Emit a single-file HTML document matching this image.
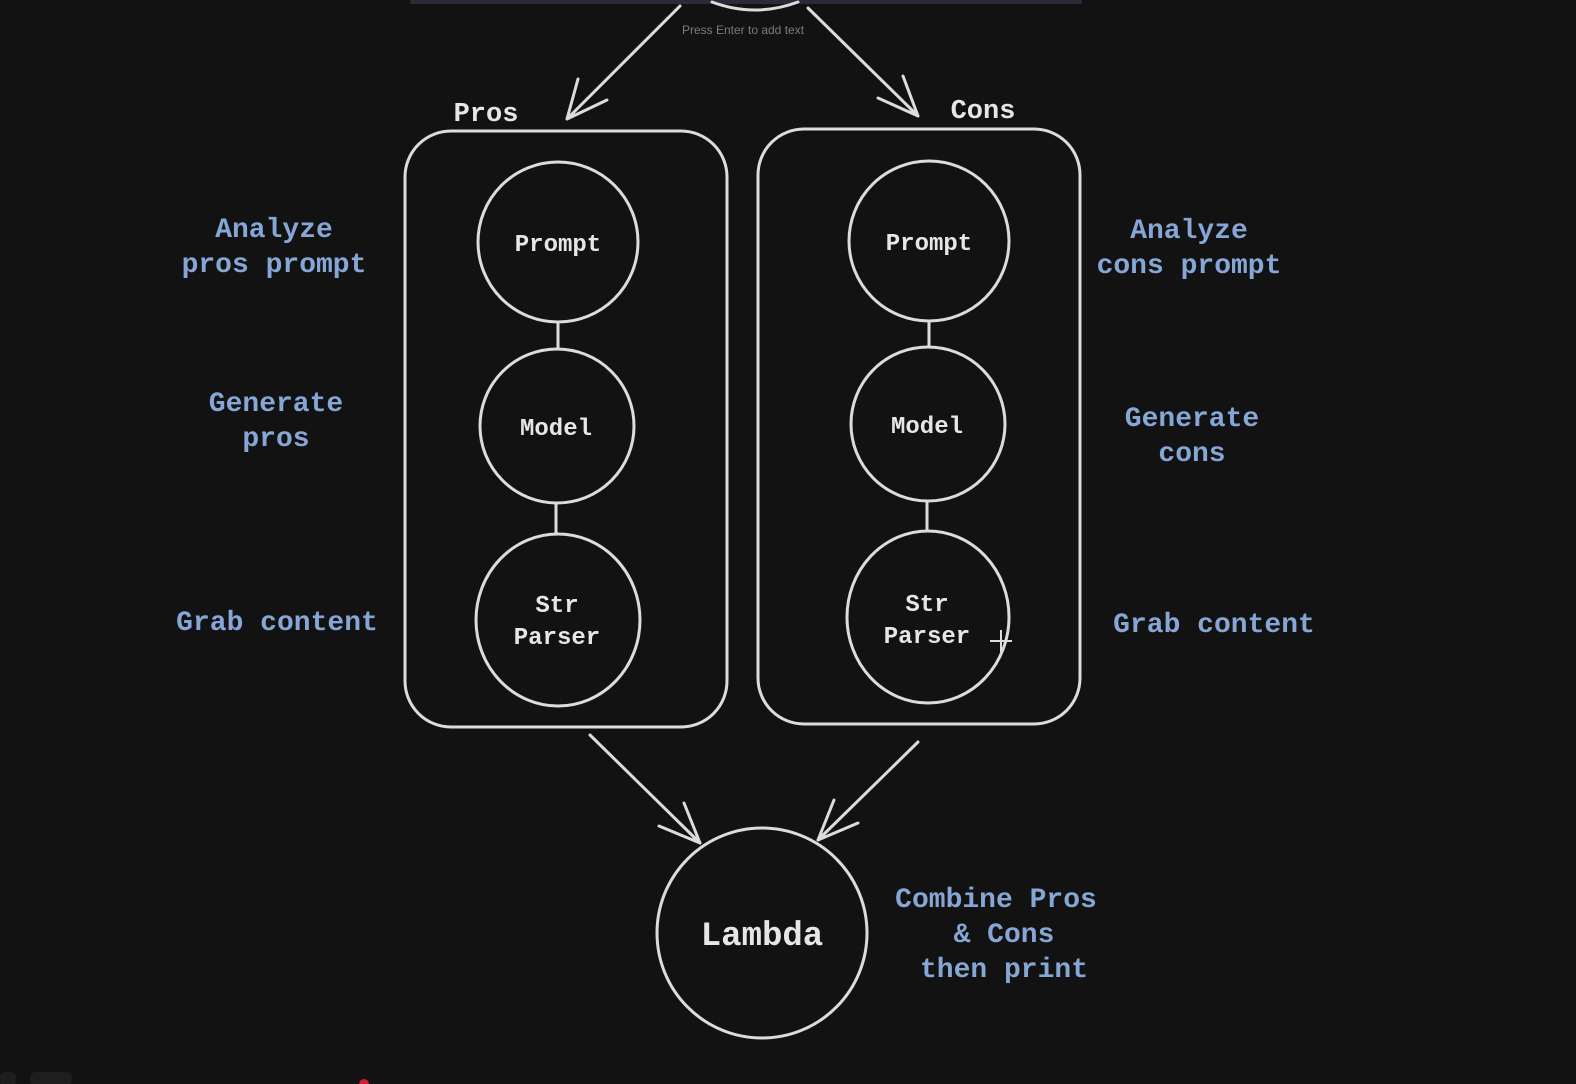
<!DOCTYPE html>
<html><head><meta charset="utf-8"><style>
html,body{margin:0;padding:0;background:#121212;width:1576px;height:1084px;overflow:hidden}
svg{display:block}
.w{font-family:"Liberation Mono","DejaVu Sans Mono",monospace;font-weight:bold;fill:#e6e6e6}
.b{font-family:"Liberation Mono","DejaVu Sans Mono",monospace;font-weight:bold;fill:#86a6d6;font-size:28px}
</style></head><body>
<svg width="1576" height="1084" viewBox="0 0 1576 1084" xmlns="http://www.w3.org/2000/svg">
<rect x="0" y="0" width="1576" height="1084" fill="#121212"/>
<rect x="410" y="0" width="672" height="4" rx="2" fill="#2b2a36"/>
<g fill="none" stroke="#dcdcdc" stroke-width="3" stroke-linecap="round" stroke-linejoin="round">
<path d="M712 2 Q755 18 798 2"/>
<path d="M680 6 L567 119 M567 119 L578 79 M567 119 L607 100"/>
<path d="M808 8 L918 116 M918 116 L878 98 M918 116 L903 76"/>
<rect x="405" y="131" width="322" height="596" rx="46"/>
<rect x="758" y="129" width="322" height="595" rx="46"/>
<circle cx="558" cy="242" r="80"/>
<circle cx="557" cy="426" r="77"/>
<ellipse cx="558" cy="620" rx="82" ry="86"/>
<path d="M558 322 V349 M556 503 V534"/>
<circle cx="929" cy="241" r="80"/>
<circle cx="928" cy="424" r="77"/>
<ellipse cx="928" cy="617" rx="81" ry="86"/>
<path d="M929 321 V347 M927 501 V531"/>
<path d="M590 735 L700 843 M700 843 L659 826 M700 843 L684 803"/>
<path d="M918 742 L818 840 M818 840 L834 800 M818 840 L858 823"/>
<circle cx="762" cy="933" r="105"/>
</g>
<text x="743" y="34" font-family="Liberation Sans,sans-serif" font-size="12" fill="#7c7c7c" text-anchor="middle">Press Enter to add text</text>
<text class="w" x="486" y="121" font-size="27" text-anchor="middle">Pros</text>
<text class="w" x="983" y="118" font-size="27" text-anchor="middle">Cons</text>
<g class="w" font-size="24" text-anchor="middle">
<text x="558" y="251">Prompt</text>
<text x="556" y="435">Model</text>
<text x="557" y="612">Str</text>
<text x="557" y="644">Parser</text>
<text x="929" y="250">Prompt</text>
<text x="927" y="433">Model</text>
<text x="927" y="611">Str</text>
<text x="927" y="643">Parser</text>
<text x="762" y="945" font-size="34">Lambda</text>
</g>
<g class="b" text-anchor="middle">
<text x="274" y="237">Analyze</text>
<text x="274" y="272">pros prompt</text>
<text x="276" y="411">Generate</text>
<text x="276" y="446">pros</text>
<text x="277" y="630">Grab content</text>
<text x="1189" y="238">Analyze</text>
<text x="1189" y="273">cons prompt</text>
<text x="1192" y="426">Generate</text>
<text x="1192" y="461">cons</text>
<text x="1214" y="632">Grab content</text>
<text x="996" y="907">Combine Pros</text>
<text x="1004" y="942">&amp; Cons</text>
<text x="1004" y="977">then print</text>
</g>
<g stroke="#ddd" stroke-width="2" fill="#121212"><path d="M1001 630 V652 M990 641 H1012"/></g>
<rect x="0" y="1072" width="16" height="14" rx="5" fill="#1e1e1e"/>
<rect x="30" y="1072" width="42" height="14" rx="6" fill="#1e1e1e"/>
<circle cx="364" cy="1084" r="5" fill="#d02030"/>
</svg>
</body></html>
